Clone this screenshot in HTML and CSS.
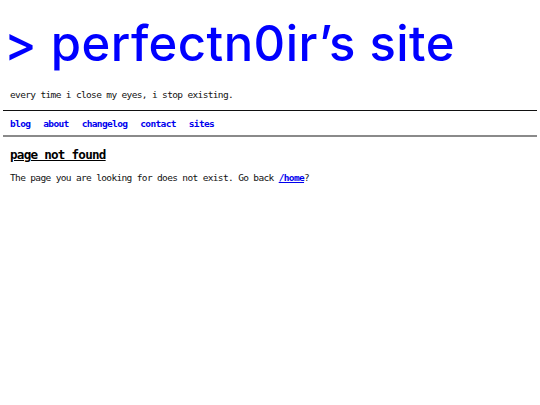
FILE: index.html
```html
<!DOCTYPE html>
<html>
<head>
<meta charset="utf-8">
<link rel="stylesheet" href="styles.css">
</head>
<body>
<header class="top">
  <h1 class="title">&gt; perfectn0ir’s site</h1>
  <p class="tagline">every time i close my eyes, i stop existing.</p>
</header>
<nav class="nav">
  <a href="#">blog</a>
  <a href="#">about</a>
  <a href="#">changelog</a>
  <a href="#">contact</a>
  <a href="#">sites</a>
</nav>
<main class="content">
  <h2 class="heading">page not found</h2>
  <p class="text">The page you are looking for does not exist. Go back <a class="home" href="#">/home</a>?</p>
</main>
</body>
</html>
```
FILE: styles.css
```css
html, body {
  margin: 0;
  padding: 0;
  background: #fff;
}
body {
  padding: 0 3px;
  font-family: "DejaVu Sans Mono", monospace;
  font-size: 9.5px;
  letter-spacing: -0.65px;
  color: #111;
}
.top {
  padding: 14px 0 0 1px;
}
.title {
  margin: 0;
  font-family: Inter, "Noto Sans", sans-serif;
  font-weight: 500;
  font-size: 49px;
  line-height: 60px;
  letter-spacing: 0.45px;
  color: #0000ff;
}
.tagline {
  margin: 15px 0 0 6px;
  line-height: 12px;
  height: 21px;
}
.nav {
  border-top: 1px solid #111;
  border-bottom: 2px solid #8a8a8a;
  display: flex;
  gap: 13px;
  padding: 0 7px;
  height: 24px;
  align-items: center;
}
.nav a {
  color: #0000ee;
  font-weight: bold;
  text-decoration: none;
}
.content {
  padding: 9px 7px;
}
.heading {
  margin: 0;
  font-size: 12.6px;
  letter-spacing: -0.75px;
  text-decoration: underline;
  line-height: 18px;
  color: #000;
}
.text {
  margin: 8px 0 0;
  line-height: 12px;
}
.home {
  color: #0000ee;
  font-weight: bold;
}
```
